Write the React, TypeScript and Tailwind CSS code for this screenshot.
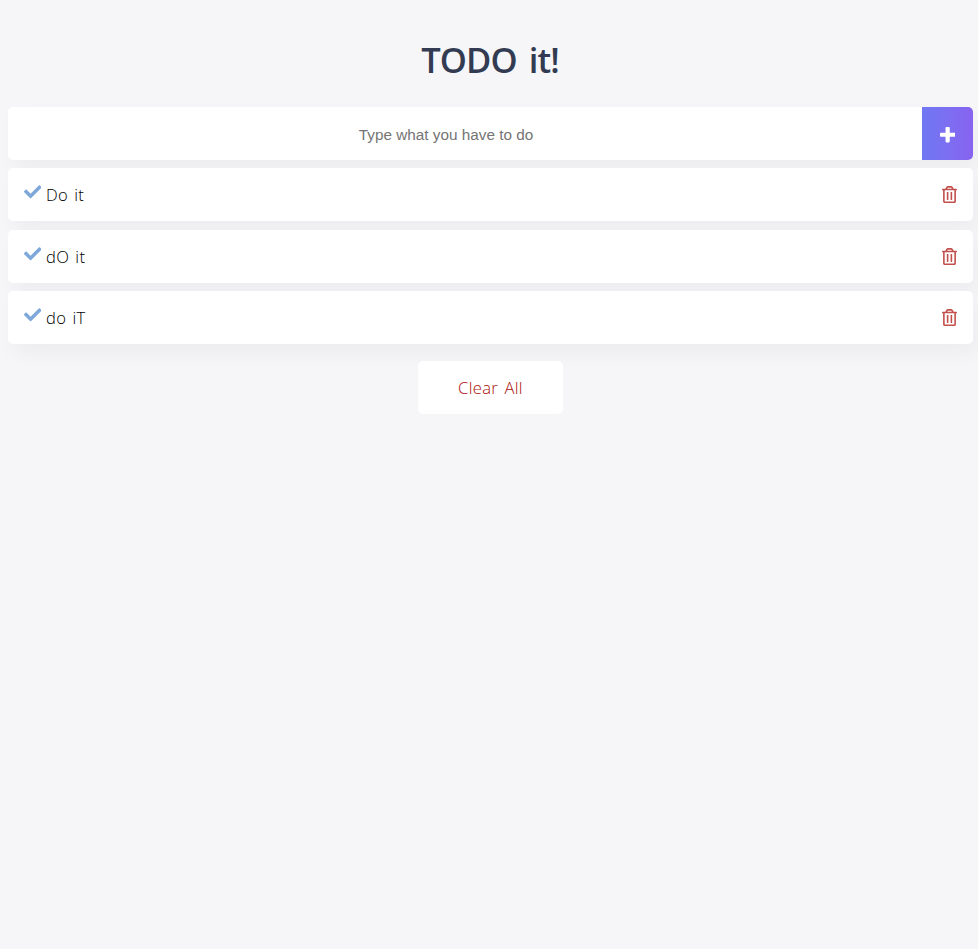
import { FaCheck } from "react-icons/fa";

const todos = ["Do it", "dO it", "do iT"];

function PlusIcon() {
  return (
    <svg viewBox="0 0 448 512" className="mt-[2px] h-[17.5px] w-[15.3px]" fill="currentColor">
      <path d="M448 294.2v-76.4c0-13.3-10.7-24-24-24H286.2V56c0-13.3-10.7-24-24-24h-76.4c-13.3 0-24 10.7-24 24v137.8H24c-13.3 0-24 10.7-24 24v76.4c0 13.3 10.7 24 24 24h137.8V456c0 13.3 10.7 24 24 24h76.4c13.3 0 24-10.7 24-24V318.2H424c13.3 0 24-10.7 24-24z" />
    </svg>
  );
}

function TrashIcon() {
  return (
    <svg viewBox="0 0 448 512" className="h-[17.2px] w-[15px]" fill="currentColor">
      <path d="M192 188v216c0 6.627-5.373 12-12 12h-24c-6.627 0-12-5.373-12-12V188c0-6.627 5.373-12 12-12h24c6.627 0 12 5.373 12 12zm100-12h-24c-6.627 0-12 5.373-12 12v216c0 6.627 5.373 12 12 12h24c6.627 0 12-5.373 12-12V188c0-6.627-5.373-12-12-12zm132-96c13.255 0 24 10.745 24 24v12c0 6.627-5.373 12-12 12h-20v336c0 26.51-21.49 48-48 48H80c-26.51 0-48-21.49-48-48V128H12c-6.627 0-12-5.373-12-12v-12c0-13.255 10.745-24 24-24h74.411l34.018-56.696A48 48 0 0 1 173.589 0h100.823a48 48 0 0 1 41.16 23.304L349.589 80H424zm-269.611 0h139.223L276.16 50.913A6 6 0 0 0 271.015 48h-94.028a6 6 0 0 0-5.145 2.913L154.389 80zM368 128H80v330a6 6 0 0 0 6 6h276a6 6 0 0 0 6-6V128z" />
    </svg>
  );
}

export default function App() {
  return (
    <div className="min-h-screen bg-[#f6f6f8] pr-[5px] pl-2 font-['Open_Sans','Noto_Sans',sans-serif]">
      <header className="flex h-[107px] justify-center pt-[36px]">
        <h1 className="mr-px text-[34.5px] leading-[48px] font-semibold tracking-[-0.9px] whitespace-nowrap text-[#323b52] [word-spacing:4px]">
          TODO it!
        </h1>
      </header>
      <div className="flex h-[53px] rounded-[5px] bg-white shadow-[5px_10px_20px_rgba(0,0,0,0.04)]">
        <input
          className="min-w-0 flex-1 pt-[3px] pr-[38px] text-center font-['Liberation_Sans',Arial,sans-serif] text-[15.3px] outline-none placeholder:text-[#757575]"
          placeholder="Type what you have to do"
        />
        <button
          aria-label="Add"
          className="flex w-[51px] items-center justify-center rounded-r-[5px] bg-linear-to-r from-[#6f78f3] to-[#8763f0] text-white"
        >
          <PlusIcon />
        </button>
      </div>
      <ul className="mt-2 flex flex-col gap-[8.5px]">
        {todos.map((todo) => (
          <li
            key={todo}
            className="flex h-[53px] items-center rounded-[5px] bg-white px-[15.5px] shadow-[5px_10px_20px_rgba(0,0,0,0.04)]"
          >
            <FaCheck className="mb-[5px] size-[17.5px] text-[#7ea8da]" />
            <span className="mt-[2px] ml-[5px] text-[16.6px] font-light tracking-[0.3px] text-black [word-spacing:1.6px]">
              {todo}
            </span>
            <button aria-label="Delete" className="mt-[0.6px] mr-[0.5px] ml-auto text-[#c2504d]">
              <TrashIcon />
            </button>
          </li>
        ))}
      </ul>
      <div className="mt-[17px] flex justify-center">
        <button className="h-[53px] w-[145px] rounded-[5px] bg-white pt-px text-[16.6px] font-light tracking-[0.35px] text-[#a80f0a] [word-spacing:1.6px]">
          Clear All
        </button>
      </div>
    </div>
  );
}
